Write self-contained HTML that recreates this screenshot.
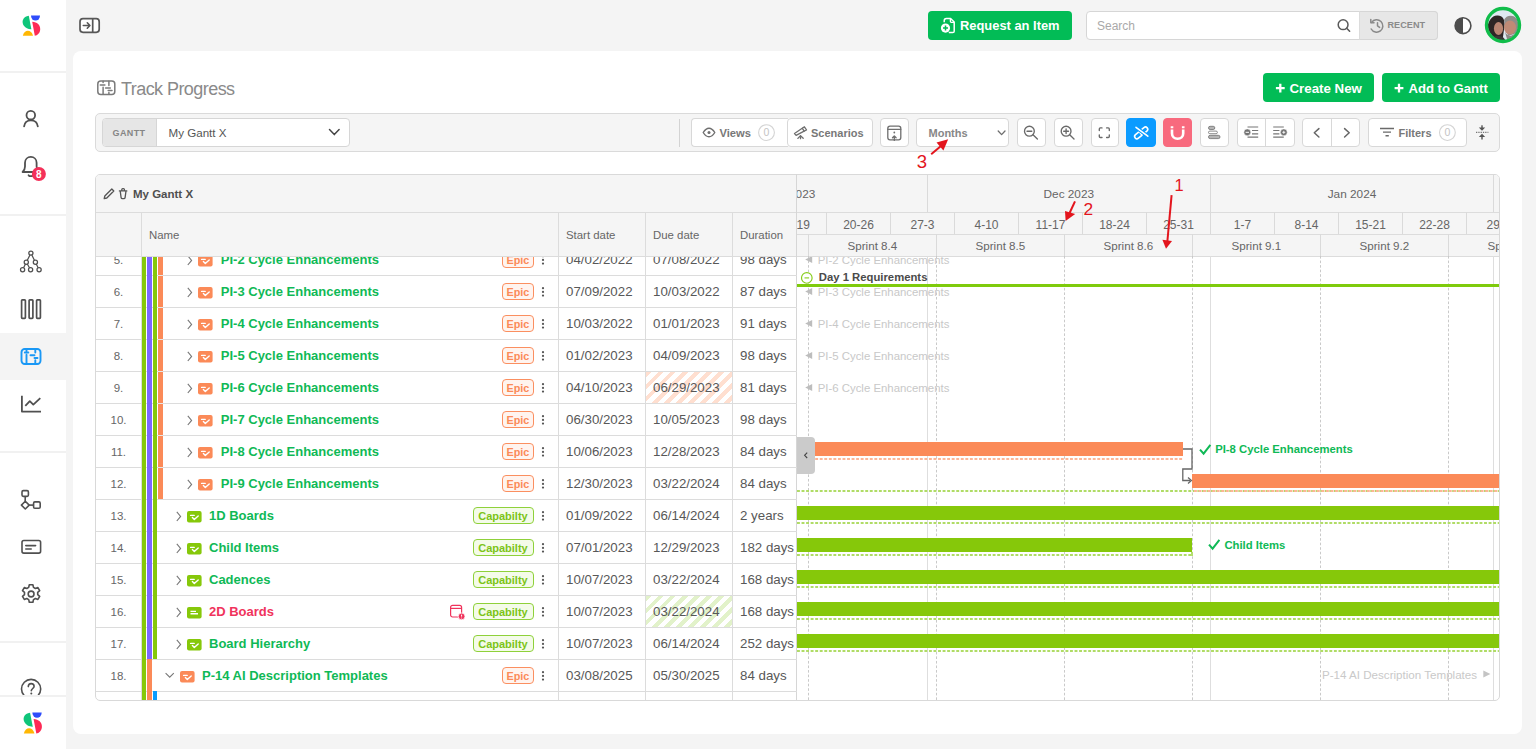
<!DOCTYPE html>
<html><head><meta charset="utf-8">
<style>
*{box-sizing:border-box;margin:0;padding:0}
html,body{width:1536px;height:749px;overflow:hidden;background:#f4f4f4;font-family:"Liberation Sans",sans-serif;color:#555}
.a{position:absolute}
svg.a{overflow:visible}
.t{position:absolute;white-space:nowrap;line-height:1}
.hr{position:absolute;left:0;width:66px;height:2px;background:#f1f1f1}
.gbtn{position:absolute;background:#02bc56;border-radius:4px}
.ib{position:absolute;top:118px;height:29px;background:#fff;border:1px solid #d8d8d8;border-radius:4px}
.vl{position:absolute;width:1px;background:#dcdcdc}
.hl{position:absolute;height:1px;background:#dcdcdc}
</style></head><body>
<!-- SIDEBAR -->
<div class="a" style="left:0;top:0;width:66px;height:749px;background:#fff"></div>
<div class="hr" style="top:71px"></div>
<div class="hr" style="top:214px"></div>
<div class="a" style="left:0;top:333px;width:66px;height:47px;background:#f4f4f4"></div>
<div class="hr" style="top:451px"></div>
<div class="hr" style="top:641px"></div>
<svg class="a" style="left:0;top:0" width="66" height="749" viewBox="0 0 66 749">
 <g id="logo">
  <path d="M31 15.6H40A4.5 5 0 0 1 31 15.6Z" fill="#2f4dfb"/>
  <path d="M28.8 15.8L31.4 29.2C25 29.5 21.5 24 22.9 20C23.8 17.5 26 16 28.8 15.8Z" fill="#0fc57a"/>
  <path d="M32.2 21.8C37 22 40.5 25 40.2 29.5C40 33 37.5 35.5 34.8 35.8Z" fill="#fd2a55"/>
  <path d="M22.8 35.8C23.5 32.5 25.8 30.8 27.9 30.8C30 30.8 32.3 32.5 33 35.8Z" fill="#ffb703"/>
 </g>
 <g fill="none" stroke="#505050" stroke-width="1.8" stroke-linecap="round" stroke-linejoin="round">
  <!-- person -->
  <circle cx="30.8" cy="115.2" r="4.3"/>
  <path d="M24.1 126.4C24.6 122.4 27.3 120.3 30.9 120.3C34.5 120.3 37.3 122.4 37.8 126.4"/>
  <!-- bell -->
  <path d="M28.6 175.3C29.6 176.5 32 176.5 33 175.3"/>
  <path d="M22.6 172C24.4 170.4 25 168.6 25 166.5V162.8C25 159.3 27.6 156.9 30.8 156.9C34 156.9 36.6 159.3 36.6 162.8V166.5C36.6 168.6 37.2 170.4 39 172Z" stroke-width="1.8"/>
 </g>
 <circle cx="38.9" cy="174" r="7" fill="#f4315a"/>
 <text x="38.9" y="177.6" font-family="Liberation Sans" font-size="10" font-weight="700" fill="#fff" text-anchor="middle">8</text>
 <g fill="none" stroke="#505050" stroke-width="1.25">
  <!-- hierarchy -->
  <path d="M30.9 253.1L26.3 262.2M30.9 253.1L35.4 262.2M26.3 262.2L22.6 269.7M26.3 262.2L30.6 269.7M35.4 262.2L39.1 269.7"/>
  <circle cx="30.9" cy="253.1" r="2.1" fill="#fff"/>
  <circle cx="26.3" cy="262.2" r="2.1" fill="#fff"/>
  <circle cx="35.4" cy="262.2" r="2.1" fill="#fff"/>
  <circle cx="22.6" cy="269.7" r="2.1" fill="#fff"/>
  <circle cx="30.6" cy="269.7" r="2.1" fill="#fff"/>
  <circle cx="39.1" cy="269.7" r="2.1" fill="#fff"/>
 </g>
 <g fill="none" stroke="#505050" stroke-width="1.7">
  <!-- columns -->
  <rect x="21.6" y="299.8" width="3.8" height="18.6" rx="0.8"/>
  <rect x="29.1" y="299.8" width="3.8" height="18.6" rx="0.8"/>
  <rect x="36.6" y="299.8" width="3.8" height="18.6" rx="0.8"/>
 </g>
 <g fill="none" stroke="#1a98f5" stroke-width="1.9" stroke-linecap="round">
  <!-- gantt active -->
  <rect x="21.5" y="349" width="19" height="15" rx="3.2"/>
  <path d="M26.5 349.2V351M24.8 352.5H28.3M26.5 354.8V363.5M35.3 349.2V352.5M30.5 355.2H34.5M34.5 358H37.5M35.3 360.2V363.5"/>
 </g>
 <g fill="none" stroke="#505050" stroke-width="1.8" stroke-linejoin="round">
  <!-- chart -->
  <path d="M21.9 395.7V411.6H41"/>
  <path d="M25.3 405.8L29.8 401.2L33.3 404.6L40.3 398.2"/>
 </g>
 <g fill="none" stroke="#505050" stroke-width="1.6" stroke-linejoin="round">
  <!-- flow -->
  <rect x="22" y="490.6" width="6.4" height="5.8" rx="1.3"/>
  <path d="M25.2 496.4V501.2"/>
  <path d="M25.3 501.2L29.2 505.1L25.3 509L21.4 505.1Z"/>
  <path d="M29.2 505.1H33.6"/>
  <rect x="33.6" y="501.9" width="6.6" height="6.4" rx="1.3"/>
  <!-- card -->
  <rect x="22" y="540.5" width="18.6" height="12.6" rx="1.8"/>
  <path d="M25.8 545.6H35.6M25.8 549H31.2" stroke-linecap="round"/>
 </g>
 <g fill="none" stroke="#505050" stroke-width="1.6" stroke-linejoin="round">
  <!-- gear -->
  <path d="M29.3 584.8h3.6l0.6 2.6 1.9 1.1 2.5-0.9 1.8 3.1-2 1.7v2.2l2 1.7-1.8 3.1-2.5-0.9-1.9 1.1-0.6 2.6h-3.6l-0.6-2.6-1.9-1.1-2.5 0.9-1.8-3.1 2-1.7v-2.2l-2-1.7 1.8-3.1 2.5 0.9 1.9-1.1z"/>
  <circle cx="31.1" cy="594" r="2.9"/>
  <!-- help -->
  <circle cx="31.1" cy="689" r="9.6"/>
  <path d="M28.3 686.6C28.3 684.8 29.6 683.6 31.2 683.6C32.9 683.6 34.1 684.8 34.1 686.3C34.1 688.4 31.3 688.6 31.3 690.8" stroke-linecap="round"/>
 </g>
 <circle cx="31.3" cy="693.6" r="1" fill="#505050"/>
</svg>
<div class="a" style="left:0;top:697px;width:66px;height:52px;background:#fff"></div><div class="hr" style="top:695px"></div>
<svg class="a" style="left:1px;top:697px" width="64" height="52" viewBox="0 0 64 52">
 <g transform="translate(-0.9,-0.7) scale(1.04)">
  <path d="M31 15.6H40A4.5 5 0 0 1 31 15.6Z" fill="#2f4dfb"/>
  <path d="M28.8 15.8L31.4 29.2C25 29.5 21.5 24 22.9 20C23.8 17.5 26 16 28.8 15.8Z" fill="#0fc57a"/>
  <path d="M32.2 21.8C37 22 40.5 25 40.2 29.5C40 33 37.5 35.5 34.8 35.8Z" fill="#fd2a55"/>
  <path d="M22.8 35.8C23.5 32.5 25.8 30.8 27.9 30.8C30 30.8 32.3 32.5 33 35.8Z" fill="#ffb703"/>
 </g>
</svg>
<!-- TOPBAR -->
<svg class="a" style="left:0;top:0" width="110" height="50">
 <rect x="80" y="18.7" width="19.2" height="13.6" rx="3" fill="#fff" stroke="#575757" stroke-width="1.7"/>
 <path d="M92.7 18.7V32.3" stroke="#575757" stroke-width="1.7"/>
 <path d="M83.3 25.5H89.8M87.3 22.8L89.9 25.5L87.3 28.2" fill="none" stroke="#575757" stroke-width="1.6" stroke-linecap="round" stroke-linejoin="round"/>
</svg>
<div class="gbtn" style="left:928px;top:11px;width:144px;height:29px"></div>
<svg class="a" style="left:928px;top:11px" width="40" height="29">
 <path d="M16.2 11.2V9.8C16.2 8.5 17 7.5 18.4 7.5H22.6L26.2 11V20.2C26.2 21 25.6 21.6 24.8 21.6H20.8" fill="none" stroke="#fff" stroke-width="1.5" stroke-linejoin="round"/>
 <path d="M22.4 7.8V10.6C22.4 11.1 22.8 11.4 23.2 11.4H26" fill="none" stroke="#fff" stroke-width="1.3"/>
 <circle cx="17.5" cy="17.1" r="4.6" fill="#fff"/>
 <path d="M17.5 14.6V19.6M15 17.1H20" stroke="#02bc55" stroke-width="1.5"/>
</svg>
<div class="t" style="left:960px;top:19.5px;font-size:12.9px;font-weight:700;color:#fff">Request an Item</div>
<div class="a" style="left:1086px;top:11px;width:352px;height:29px;background:#fff;border:1px solid #d6d6d6;border-radius:4px"></div>
<div class="a" style="left:1359px;top:11px;width:79px;height:29px;background:#e7e7e7;border:1px solid #d6d6d6;border-left:1px solid #dcdcdc;border-radius:0 4px 4px 0"></div>
<div class="t" style="left:1097px;top:20px;font-size:12px;color:#a9a9a9">Search</div>
<svg class="a" style="left:1330px;top:14px" width="160" height="24">
 <circle cx="13.1" cy="10.7" r="4.9" fill="none" stroke="#5a5a5a" stroke-width="1.5"/>
 <path d="M16.7 14.3L19.6 17.2" stroke="#5a5a5a" stroke-width="1.6" stroke-linecap="round"/>
 <g fill="none" stroke="#8a8a8a" stroke-width="1.5" stroke-linecap="round" stroke-linejoin="round">
  <path d="M41.6 8.4A6.2 6.2 0 1 1 41.2 15"/>
  <path d="M40.8 5.6V8.8H44"/>
  <path d="M47.5 8.8V11.8L49.6 13.4"/>
 </g>
 <circle cx="133" cy="11.7" r="7.9" fill="#fff" stroke="#4d4d4d" stroke-width="1.6"/>
 <path d="M133 3.8A7.9 7.9 0 0 0 133 19.6Z" fill="#4d4d4d"/>
</svg>
<div class="t" style="left:1387.5px;top:21px;font-size:9.1px;font-weight:700;color:#8a8a8a;letter-spacing:0.05px">RECENT</div>
<svg class="a" style="left:1480px;top:2px" width="46" height="46">
 <defs>
  <clipPath id="av"><circle cx="23" cy="23" r="15.2"/></clipPath>
 </defs>
 <g clip-path="url(#av)">
  <rect x="0" y="0" width="46" height="46" fill="#dfe9f1"/>
  <path d="M6 40C6 24 9 14 17 13.5C23 13 25 18 24.5 24L22 42Z" fill="#2e2626"/>
  <path d="M24 18C26 13 33 12.5 36 16C39 19 39 26 37 31L28 34Z" fill="#8f8c8a"/>
  <ellipse cx="18.5" cy="26.5" rx="4.6" ry="6.5" fill="#b98572"/>
  <ellipse cx="30" cy="25.5" rx="6" ry="7" fill="#bf8a76"/>
  <path d="M25 30C27 34 31 35 34 32L33 37L27 37Z" fill="#8d8784"/>
  <path d="M8 46C9 36 14 33 20 34C24 35 26 37 27 46Z" fill="#3a3535"/>
  <path d="M22 46C23 39 28 36 34 36C38 36 40 40 40 46Z" fill="#4c4747"/>
 </g>
 <circle cx="23" cy="23" r="16.5" fill="none" stroke="#10bd4a" stroke-width="3.4"/>
</svg>
<!-- CARD -->
<div class="a" style="left:73px;top:51px;width:1449px;height:683px;background:#fff;border-radius:8px"></div>
<svg class="a" style="left:90px;top:70px" width="30" height="30">
 <g fill="none" stroke="#7a7a7a" stroke-width="1.5" stroke-linecap="round">
  <rect x="7.8" y="11" width="17" height="13.4" rx="3"/>
  <path d="M13.1 11.2V12.4M10.3 15.1H14.9M13.1 17.3V24.2M18.9 11.2V15.5M15.6 18H20.3M18.2 20.6H22M18.9 22.5V24.2"/>
 </g>
</svg>
<div class="t" style="left:121px;top:80px;font-size:18px;letter-spacing:-0.56px;color:#8a8a8a">Track Progress</div>
<div class="gbtn" style="left:1263px;top:73px;width:111px;height:29px"></div>
<div class="gbtn" style="left:1382px;top:73px;width:117.5px;height:29px"></div>
<svg class="a" style="left:1263px;top:73px" width="240" height="29">
 <path d="M12.9 15.2H21.7M17.3 10.8V19.6" stroke="#fff" stroke-width="2.3"/>
 <path d="M131.6 15.2H140.4M136 10.8V19.6" stroke="#fff" stroke-width="2.3"/>
</svg>
<div class="t" style="left:1289.5px;top:81.5px;font-size:13.3px;font-weight:700;color:#fff">Create New</div>
<div class="t" style="left:1408.5px;top:81.5px;font-size:13.1px;font-weight:700;color:#fff">Add to Gantt</div>
<!-- TOOLBAR -->
<div class="a" style="left:95px;top:113px;width:1404.5px;height:39px;background:#f5f5f5;border:1px solid #dadada;border-radius:5px"></div>
<div class="a" style="left:102px;top:118px;width:248px;height:29px;background:#fff;border:1px solid #d6d6d6;border-radius:4px;overflow:hidden">
 <div class="a" style="left:0;top:0;width:54px;height:27px;background:#e6e6e6;border-right:1px solid #d6d6d6"></div>
</div>
<div class="t" style="left:112.5px;top:128.7px;font-size:9px;font-weight:700;color:#858585;letter-spacing:0.4px">GANTT</div>
<div class="t" style="left:168.5px;top:127px;font-size:11.6px;color:#555">My Gantt X</div>
<div class="a" style="left:679px;top:118.5px;width:1px;height:28px;background:#d3d3d3"></div>
<div class="ib" style="left:691px;width:97px;border-right:none;border-radius:4px 0 0 4px"></div>
<div class="ib" style="left:786.5px;width:86px"></div>
<div class="ib" style="left:880px;width:29px"></div>
<div class="ib" style="left:916px;width:93px"></div>
<div class="ib" style="left:1016.5px;width:29px"></div>
<div class="ib" style="left:1053.5px;width:29px"></div>
<div class="ib" style="left:1090.5px;width:28.5px"></div>
<div class="ib" style="left:1126px;width:29.5px;background:#0b9bff;border-color:#0b9bff"></div>
<div class="ib" style="left:1163px;width:29px;background:#f86a7e;border-color:#f86a7e"></div>
<div class="ib" style="left:1199.5px;width:29px"></div>
<div class="ib" style="left:1236.5px;width:58px"></div>
<div class="a" style="left:1265px;top:119px;width:1px;height:27px;background:#d8d8d8"></div>
<div class="ib" style="left:1302px;width:58px"></div>
<div class="a" style="left:1331px;top:119px;width:1px;height:27px;background:#d8d8d8"></div>
<div class="ib" style="left:1368px;width:99px"></div>
<div class="t" style="left:719.5px;top:128.3px;font-size:11.2px;font-weight:700;color:#787878">Views</div>
<div class="t" style="left:811px;top:128.3px;font-size:11px;font-weight:700;color:#787878">Scenarios</div>
<div class="t" style="left:928.5px;top:127.8px;font-size:11px;font-weight:700;color:#878787">Months</div>
<div class="t" style="left:1398.5px;top:128.3px;font-size:11px;font-weight:700;color:#787878">Filters</div>
<svg class="a" style="left:0;top:0;overflow:visible" width="1536" height="160">
 <g fill="none" stroke="#454545" stroke-width="1.5" stroke-linecap="round" stroke-linejoin="round">
  <path d="M329.5 129.6L334.3 134.6L339.1 129.6"/>
 </g>
 <g fill="none" stroke="#6f6f6f" stroke-width="1.4" stroke-linecap="round" stroke-linejoin="round">
  <!-- eye -->
  <path d="M703.2 132.5C705 129.6 707 128.2 709 128.2C711 128.2 713 129.6 714.8 132.5C713 135.4 711 136.8 709 136.8C707 136.8 705 135.4 703.2 132.5Z"/>
 </g>
 <circle cx="709" cy="132.5" r="1.5" fill="#6f6f6f"/>
 <circle cx="766.5" cy="132.6" r="7.9" fill="none" stroke="#d4d4d4" stroke-width="1.1"/>
 <circle cx="1447.4" cy="132.6" r="7.9" fill="none" stroke="#d4d4d4" stroke-width="1.1"/>
 <text x="766.5" y="136.4" font-family="Liberation Sans" font-size="10.5" fill="#c4c4c4" text-anchor="middle">0</text>
 <text x="1447.4" y="136.4" font-family="Liberation Sans" font-size="10.5" fill="#c4c4c4" text-anchor="middle">0</text>
 <g fill="none" stroke="#6f6f6f" stroke-width="1.3" stroke-linecap="round" stroke-linejoin="round">
  <!-- telescope -->
  <path d="M794.5 133.5L804.4 126.8L806.5 129.9L796.1 135.4Z"/>
  <path d="M802.4 128.3L804.1 131.2"/>
  <path d="M800.5 135.6L797.9 138.4M800.5 135.6V138.7M800.5 135.6L803.2 138.3"/>
  <!-- export -->
  <rect x="887.8" y="126.2" width="13" height="13.6" rx="2.2"/>
  <path d="M887.8 129.3H900.8"/>
  <path d="M894.3 136.2V140.4M892.5 137.8L894.3 136L896.1 137.8"/>
  <!-- months chevron -->
  <path d="M998.2 131L1001.6 134.6L1005 131"/>
 </g>
 <circle cx="894.3" cy="132.5" r="0.9" fill="#6f6f6f"/>
 <g fill="none" stroke="#6a6a6a" stroke-width="1.35" stroke-linecap="round" stroke-linejoin="round">
  <!-- zoom out -->
  <circle cx="1029.4" cy="131.2" r="4.9"/>
  <path d="M1033 134.8L1037.4 139.1M1027 131.2H1031.8"/>
  <!-- zoom in -->
  <circle cx="1066.1" cy="131.2" r="4.9"/>
  <path d="M1069.7 134.8L1074 139M1063.7 131.2H1068.5M1066.1 128.8V133.6"/>
  <!-- fullscreen -->
  <path d="M1099.3 130.6V128.9Q1099.3 127.9 1100.3 127.9H1102M1106.6 127.9H1108.3Q1109.3 127.9 1109.3 128.9V130.6M1109.3 134.8V136.5Q1109.3 137.5 1108.3 137.5H1106.6M1102 137.5H1100.3Q1099.3 137.5 1099.3 136.5V134.8"/>
 </g>
 <g fill="none" stroke="#fff" stroke-width="1.6" stroke-linecap="round" stroke-linejoin="round">
  <!-- link -->
  <g transform="rotate(-40 1141.2 132.9)">
   <rect x="1133.4" y="130.6" width="8.6" height="4.6" rx="2.3"/>
   <rect x="1140.4" y="130.6" width="8.6" height="4.6" rx="2.3"/>
  </g>
  <path d="M1136 127.3L1147.8 136.2" stroke="#0b9bff" stroke-width="3.6"/>
  <path d="M1136 127.3L1147.8 136.2"/>
  <!-- magnet -->
  <path d="M1172 129.6V133.4C1172 136.8 1174.5 138.8 1177.6 138.8C1180.7 138.8 1183.2 136.8 1183.2 133.4V129.6" stroke-width="2.6" stroke-linecap="butt"/>
  <path d="M1172 126.3V128.3M1183.2 126.3V128.3" stroke-width="2.6" stroke-linecap="butt"/>
 </g>
 <g stroke="#6e6e6e" stroke-width="0.8" fill="#b5b5b5">
  <!-- align -->
  <rect x="1208.5" y="126.3" width="6.3" height="3.2" rx="1.6"/>
  <rect x="1208.5" y="131.1" width="8.9" height="2.6" rx="1.3" fill="#fff"/>
  <rect x="1208.5" y="135.3" width="11.5" height="3.3" rx="1.65"/>
 </g>
 <g fill="none" stroke="#777" stroke-width="1.2">
  <path d="M1247.5 127H1258.2M1252 130.5H1258.2M1252 133.8H1258.2M1247.5 137.2H1258.2"/>
  <path d="M1273.2 127H1283.8M1273.2 130.5H1279.4M1273.2 133.8H1279.4M1273.2 137.2H1283.8"/>
 </g>
 <circle cx="1247.3" cy="132.3" r="3.4" fill="#727272" stroke="#fff" stroke-width="0.5"/>
 <path d="M1245.6 132.3H1249" stroke="#fff" stroke-width="1"/>
 <circle cx="1283.8" cy="132.3" r="3.4" fill="#727272" stroke="#fff" stroke-width="0.5"/>
 <path d="M1282.3 132.3H1285.3M1283.8 130.8V133.8" stroke="#fff" stroke-width="0.9"/>
 <g fill="none" stroke="#666" stroke-width="1.5" stroke-linecap="round" stroke-linejoin="round">
  <path d="M1318.9 128.6L1314.3 132.8L1318.9 137"/>
  <path d="M1344.6 128.6L1349.2 132.8L1344.6 137"/>
 </g>
 <g fill="none" stroke="#6a6a6a" stroke-width="1.4">
  <path d="M1380 128.5H1394M1383 132.1H1391M1385.5 135.8H1388.8"/>
 </g>
 <g fill="#555">
  <path d="M1482 130.8L1478.8 127.6H1485.2Z"/>
  <rect x="1481.3" y="125.3" width="1.4" height="3"/>
  <path d="M1482 133.8L1478.8 137H1485.2Z"/>
  <rect x="1481.3" y="136.5" width="1.4" height="3"/>
 </g>
 <path d="M1476 132.3H1488.4" stroke="#555" stroke-width="1" stroke-dasharray="1.3 1"/>
</svg>
<!-- GRID -->
<div class="a" style="left:95px;top:174px;width:1405px;height:527px;border:1px solid #d9d9d9;border-radius:5px;background:#fff;overflow:hidden">
 <div class="a" style="left:0;top:0;width:1403px;height:82px;background:#f5f5f5"></div>
</div>
<div class="hl" style="left:96px;top:212px;width:1403px"></div>
<div class="hl" style="left:96px;top:256px;width:701px"></div>
<div class="hl" style="left:797px;top:234px;width:702px"></div>
<div class="hl" style="left:797px;top:256px;width:702px"></div>
<div class="vl" style="left:141px;top:212px;height:488px"></div>
<div class="vl" style="left:558px;top:212px;height:488px"></div>
<div class="vl" style="left:645px;top:212px;height:488px"></div>
<div class="vl" style="left:732px;top:212px;height:488px"></div>
<div class="vl" style="left:796px;top:174px;height:526px;background:#d6d6d6"></div>
<svg class="a" style="left:96px;top:180px" width="40" height="26"><g fill="none" stroke="#555" stroke-width="1.3" stroke-linejoin="round" stroke-linecap="round"><path d="M8.8 16L15.8 9L17.8 11L10.8 18L8.2 18.6Z"/><path d="M23.4 10.9H30.8M25.8 10.9V9.5Q25.8 8.6 26.7 8.6H27.5Q28.4 8.6 28.4 9.5V10.9M24.3 11.7L25.1 17.6Q25.3 18.6 26.3 18.6H27.9Q28.9 18.6 29.1 17.6L29.9 11.7"/></g></svg>
<div class="t" style="left:133px;top:188.5px;font-size:11.5px;font-weight:700;color:#4f4f4f">My Gantt X</div>
<div class="t" style="left:149px;top:229.5px;font-size:11.4px;color:#666">Name</div>
<div class="t" style="left:566px;top:229.5px;font-size:11.4px;color:#666">Start date</div>
<div class="t" style="left:653px;top:229.5px;font-size:11.4px;color:#666">Due date</div>
<div class="t" style="left:740px;top:229.5px;font-size:11.4px;color:#666">Duration</div>
<div class="a" style="left:96px;top:257px;width:701px;height:443px;overflow:hidden">
<div class="hl" style="left:0;top:18px;width:701px"></div>
<div class="hl" style="left:0;top:50px;width:701px"></div>
<div class="hl" style="left:0;top:82px;width:701px"></div>
<div class="hl" style="left:0;top:114px;width:701px"></div>
<div class="hl" style="left:0;top:146px;width:701px"></div>
<div class="a" style="left:550px;top:115px;width:86px;height:31px;background:repeating-linear-gradient(135deg,#ffdfd0 0 4.2px,#fff 4.2px 8.5px)"></div>
<div class="hl" style="left:0;top:178px;width:701px"></div>
<div class="hl" style="left:0;top:210px;width:701px"></div>
<div class="hl" style="left:0;top:242px;width:701px"></div>
<div class="hl" style="left:0;top:274px;width:701px"></div>
<div class="hl" style="left:0;top:306px;width:701px"></div>
<div class="hl" style="left:0;top:338px;width:701px"></div>
<div class="hl" style="left:0;top:370px;width:701px"></div>
<div class="a" style="left:550px;top:339px;width:86px;height:31px;background:repeating-linear-gradient(135deg,#e2f2ca 0 4.2px,#fff 4.2px 8.5px)"></div>
<div class="hl" style="left:0;top:402px;width:701px"></div>
<div class="hl" style="left:0;top:434px;width:701px"></div>
<div class="a" style="left:45.5px;top:-1px;width:4.5px;height:403px;background:#86c80a"></div>
<div class="a" style="left:51px;top:-1px;width:5px;height:403px;background:#7d67ff"></div>
<div class="a" style="left:56.5px;top:-1px;width:4.5px;height:403px;background:#86c80a"></div>
<div class="a" style="left:62px;top:-1px;width:5px;height:243px;background:#fb8a58"></div>
<div class="a" style="left:45.5px;top:402px;width:4.5px;height:41px;background:#86c80a"></div>
<div class="a" style="left:51px;top:402px;width:5px;height:41px;background:#fb8a58"></div>
<div class="a" style="left:56.5px;top:434px;width:4.5px;height:9px;background:#0a9cff"></div>
<div class="a" style="left:62px;top:18px;width:5px;height:1px;background:#e6e6e6"></div>
<div class="a" style="left:62px;top:50px;width:5px;height:1px;background:#e6e6e6"></div>
<div class="a" style="left:62px;top:82px;width:5px;height:1px;background:#e6e6e6"></div>
<div class="a" style="left:62px;top:114px;width:5px;height:1px;background:#e6e6e6"></div>
<div class="a" style="left:62px;top:146px;width:5px;height:1px;background:#e6e6e6"></div>
<div class="a" style="left:62px;top:178px;width:5px;height:1px;background:#e6e6e6"></div>
<div class="a" style="left:62px;top:210px;width:5px;height:1px;background:#e6e6e6"></div>
</div>
<div class="a" style="left:0;top:257px;width:797px;height:443px;overflow:hidden"><div class="a" style="left:0;top:-257px;width:797px;height:749px">
<div class="t" style="left:96px;width:45px;text-align:center;top:255px;font-size:11.5px;color:#666">5.</div>
<svg class="a" style="left:187.1px;top:254.6px" width="8" height="12"><path d="M0.8 0.8L4.6 5.4L0.8 10" fill="none" stroke="#777" stroke-width="1.1"/></svg>
<svg class="a" style="left:198px;top:254.8px" width="15" height="11.5"><rect x="0" y="0" width="14.6" height="11.4" rx="2" fill="#fb8a58"/><path d="M3.6 4.4H7.2M5.4 6.5L7.3 8.4L11.2 4.9" fill="none" stroke="#fff" stroke-width="1.4" stroke-linecap="round" stroke-linejoin="round"/></svg>
<div class="t" style="left:220.8px;top:253px;font-size:13px;font-weight:700;color:#0fb956">PI-2 Cycle Enhancements</div>
<div class="a" style="left:502px;top:251px;width:32px;height:17px;border:1.3px solid #fb8f60;background:#fff4ef;border-radius:4px"></div>
<div class="t" style="left:506.5px;top:255px;font-size:10.8px;font-weight:700;color:#fb8a58">Epic</div>
<svg class="a" style="left:541px;top:253.4px" width="4" height="14"><circle cx="2" cy="3.2" r="1.1" fill="#555"/><circle cx="2" cy="6.9" r="1.1" fill="#555"/><circle cx="2" cy="10.6" r="1.1" fill="#555"/></svg>
<div class="t" style="left:566px;top:253px;font-size:13.3px;color:#585858">04/02/2022</div>
<div class="t" style="left:653px;top:253px;font-size:13.3px;color:#585858">07/08/2022</div>
<div class="t" style="left:740px;top:253px;font-size:13.3px;color:#585858">98 days</div>
<div class="t" style="left:96px;width:45px;text-align:center;top:287px;font-size:11.5px;color:#666">6.</div>
<svg class="a" style="left:187.1px;top:286.6px" width="8" height="12"><path d="M0.8 0.8L4.6 5.4L0.8 10" fill="none" stroke="#777" stroke-width="1.1"/></svg>
<svg class="a" style="left:198px;top:286.8px" width="15" height="11.5"><rect x="0" y="0" width="14.6" height="11.4" rx="2" fill="#fb8a58"/><path d="M3.6 4.4H7.2M5.4 6.5L7.3 8.4L11.2 4.9" fill="none" stroke="#fff" stroke-width="1.4" stroke-linecap="round" stroke-linejoin="round"/></svg>
<div class="t" style="left:220.8px;top:285px;font-size:13px;font-weight:700;color:#0fb956">PI-3 Cycle Enhancements</div>
<div class="a" style="left:502px;top:283px;width:32px;height:17px;border:1.3px solid #fb8f60;background:#fff4ef;border-radius:4px"></div>
<div class="t" style="left:506.5px;top:287px;font-size:10.8px;font-weight:700;color:#fb8a58">Epic</div>
<svg class="a" style="left:541px;top:285.4px" width="4" height="14"><circle cx="2" cy="3.2" r="1.1" fill="#555"/><circle cx="2" cy="6.9" r="1.1" fill="#555"/><circle cx="2" cy="10.6" r="1.1" fill="#555"/></svg>
<div class="t" style="left:566px;top:285px;font-size:13.3px;color:#585858">07/09/2022</div>
<div class="t" style="left:653px;top:285px;font-size:13.3px;color:#585858">10/03/2022</div>
<div class="t" style="left:740px;top:285px;font-size:13.3px;color:#585858">87 days</div>
<div class="t" style="left:96px;width:45px;text-align:center;top:319px;font-size:11.5px;color:#666">7.</div>
<svg class="a" style="left:187.1px;top:318.6px" width="8" height="12"><path d="M0.8 0.8L4.6 5.4L0.8 10" fill="none" stroke="#777" stroke-width="1.1"/></svg>
<svg class="a" style="left:198px;top:318.8px" width="15" height="11.5"><rect x="0" y="0" width="14.6" height="11.4" rx="2" fill="#fb8a58"/><path d="M3.6 4.4H7.2M5.4 6.5L7.3 8.4L11.2 4.9" fill="none" stroke="#fff" stroke-width="1.4" stroke-linecap="round" stroke-linejoin="round"/></svg>
<div class="t" style="left:220.8px;top:317px;font-size:13px;font-weight:700;color:#0fb956">PI-4 Cycle Enhancements</div>
<div class="a" style="left:502px;top:315px;width:32px;height:17px;border:1.3px solid #fb8f60;background:#fff4ef;border-radius:4px"></div>
<div class="t" style="left:506.5px;top:319px;font-size:10.8px;font-weight:700;color:#fb8a58">Epic</div>
<svg class="a" style="left:541px;top:317.4px" width="4" height="14"><circle cx="2" cy="3.2" r="1.1" fill="#555"/><circle cx="2" cy="6.9" r="1.1" fill="#555"/><circle cx="2" cy="10.6" r="1.1" fill="#555"/></svg>
<div class="t" style="left:566px;top:317px;font-size:13.3px;color:#585858">10/03/2022</div>
<div class="t" style="left:653px;top:317px;font-size:13.3px;color:#585858">01/01/2023</div>
<div class="t" style="left:740px;top:317px;font-size:13.3px;color:#585858">91 days</div>
<div class="t" style="left:96px;width:45px;text-align:center;top:351px;font-size:11.5px;color:#666">8.</div>
<svg class="a" style="left:187.1px;top:350.6px" width="8" height="12"><path d="M0.8 0.8L4.6 5.4L0.8 10" fill="none" stroke="#777" stroke-width="1.1"/></svg>
<svg class="a" style="left:198px;top:350.8px" width="15" height="11.5"><rect x="0" y="0" width="14.6" height="11.4" rx="2" fill="#fb8a58"/><path d="M3.6 4.4H7.2M5.4 6.5L7.3 8.4L11.2 4.9" fill="none" stroke="#fff" stroke-width="1.4" stroke-linecap="round" stroke-linejoin="round"/></svg>
<div class="t" style="left:220.8px;top:349px;font-size:13px;font-weight:700;color:#0fb956">PI-5 Cycle Enhancements</div>
<div class="a" style="left:502px;top:347px;width:32px;height:17px;border:1.3px solid #fb8f60;background:#fff4ef;border-radius:4px"></div>
<div class="t" style="left:506.5px;top:351px;font-size:10.8px;font-weight:700;color:#fb8a58">Epic</div>
<svg class="a" style="left:541px;top:349.4px" width="4" height="14"><circle cx="2" cy="3.2" r="1.1" fill="#555"/><circle cx="2" cy="6.9" r="1.1" fill="#555"/><circle cx="2" cy="10.6" r="1.1" fill="#555"/></svg>
<div class="t" style="left:566px;top:349px;font-size:13.3px;color:#585858">01/02/2023</div>
<div class="t" style="left:653px;top:349px;font-size:13.3px;color:#585858">04/09/2023</div>
<div class="t" style="left:740px;top:349px;font-size:13.3px;color:#585858">98 days</div>
<div class="t" style="left:96px;width:45px;text-align:center;top:383px;font-size:11.5px;color:#666">9.</div>
<svg class="a" style="left:187.1px;top:382.6px" width="8" height="12"><path d="M0.8 0.8L4.6 5.4L0.8 10" fill="none" stroke="#777" stroke-width="1.1"/></svg>
<svg class="a" style="left:198px;top:382.8px" width="15" height="11.5"><rect x="0" y="0" width="14.6" height="11.4" rx="2" fill="#fb8a58"/><path d="M3.6 4.4H7.2M5.4 6.5L7.3 8.4L11.2 4.9" fill="none" stroke="#fff" stroke-width="1.4" stroke-linecap="round" stroke-linejoin="round"/></svg>
<div class="t" style="left:220.8px;top:381px;font-size:13px;font-weight:700;color:#0fb956">PI-6 Cycle Enhancements</div>
<div class="a" style="left:502px;top:379px;width:32px;height:17px;border:1.3px solid #fb8f60;background:#fff4ef;border-radius:4px"></div>
<div class="t" style="left:506.5px;top:383px;font-size:10.8px;font-weight:700;color:#fb8a58">Epic</div>
<svg class="a" style="left:541px;top:381.4px" width="4" height="14"><circle cx="2" cy="3.2" r="1.1" fill="#555"/><circle cx="2" cy="6.9" r="1.1" fill="#555"/><circle cx="2" cy="10.6" r="1.1" fill="#555"/></svg>
<div class="t" style="left:566px;top:381px;font-size:13.3px;color:#585858">04/10/2023</div>
<div class="t" style="left:653px;top:381px;font-size:13.3px;color:#585858">06/29/2023</div>
<div class="t" style="left:740px;top:381px;font-size:13.3px;color:#585858">81 days</div>
<div class="t" style="left:96px;width:45px;text-align:center;top:415px;font-size:11.5px;color:#666">10.</div>
<svg class="a" style="left:187.1px;top:414.6px" width="8" height="12"><path d="M0.8 0.8L4.6 5.4L0.8 10" fill="none" stroke="#777" stroke-width="1.1"/></svg>
<svg class="a" style="left:198px;top:414.8px" width="15" height="11.5"><rect x="0" y="0" width="14.6" height="11.4" rx="2" fill="#fb8a58"/><path d="M3.6 4.4H7.2M5.4 6.5L7.3 8.4L11.2 4.9" fill="none" stroke="#fff" stroke-width="1.4" stroke-linecap="round" stroke-linejoin="round"/></svg>
<div class="t" style="left:220.8px;top:413px;font-size:13px;font-weight:700;color:#0fb956">PI-7 Cycle Enhancements</div>
<div class="a" style="left:502px;top:411px;width:32px;height:17px;border:1.3px solid #fb8f60;background:#fff4ef;border-radius:4px"></div>
<div class="t" style="left:506.5px;top:415px;font-size:10.8px;font-weight:700;color:#fb8a58">Epic</div>
<svg class="a" style="left:541px;top:413.4px" width="4" height="14"><circle cx="2" cy="3.2" r="1.1" fill="#555"/><circle cx="2" cy="6.9" r="1.1" fill="#555"/><circle cx="2" cy="10.6" r="1.1" fill="#555"/></svg>
<div class="t" style="left:566px;top:413px;font-size:13.3px;color:#585858">06/30/2023</div>
<div class="t" style="left:653px;top:413px;font-size:13.3px;color:#585858">10/05/2023</div>
<div class="t" style="left:740px;top:413px;font-size:13.3px;color:#585858">98 days</div>
<div class="t" style="left:96px;width:45px;text-align:center;top:447px;font-size:11.5px;color:#666">11.</div>
<svg class="a" style="left:187.1px;top:446.6px" width="8" height="12"><path d="M0.8 0.8L4.6 5.4L0.8 10" fill="none" stroke="#777" stroke-width="1.1"/></svg>
<svg class="a" style="left:198px;top:446.8px" width="15" height="11.5"><rect x="0" y="0" width="14.6" height="11.4" rx="2" fill="#fb8a58"/><path d="M3.6 4.4H7.2M5.4 6.5L7.3 8.4L11.2 4.9" fill="none" stroke="#fff" stroke-width="1.4" stroke-linecap="round" stroke-linejoin="round"/></svg>
<div class="t" style="left:220.8px;top:445px;font-size:13px;font-weight:700;color:#0fb956">PI-8 Cycle Enhancements</div>
<div class="a" style="left:502px;top:443px;width:32px;height:17px;border:1.3px solid #fb8f60;background:#fff4ef;border-radius:4px"></div>
<div class="t" style="left:506.5px;top:447px;font-size:10.8px;font-weight:700;color:#fb8a58">Epic</div>
<svg class="a" style="left:541px;top:445.4px" width="4" height="14"><circle cx="2" cy="3.2" r="1.1" fill="#555"/><circle cx="2" cy="6.9" r="1.1" fill="#555"/><circle cx="2" cy="10.6" r="1.1" fill="#555"/></svg>
<div class="t" style="left:566px;top:445px;font-size:13.3px;color:#585858">10/06/2023</div>
<div class="t" style="left:653px;top:445px;font-size:13.3px;color:#585858">12/28/2023</div>
<div class="t" style="left:740px;top:445px;font-size:13.3px;color:#585858">84 days</div>
<div class="t" style="left:96px;width:45px;text-align:center;top:479px;font-size:11.5px;color:#666">12.</div>
<svg class="a" style="left:187.1px;top:478.6px" width="8" height="12"><path d="M0.8 0.8L4.6 5.4L0.8 10" fill="none" stroke="#777" stroke-width="1.1"/></svg>
<svg class="a" style="left:198px;top:478.8px" width="15" height="11.5"><rect x="0" y="0" width="14.6" height="11.4" rx="2" fill="#fb8a58"/><path d="M3.6 4.4H7.2M5.4 6.5L7.3 8.4L11.2 4.9" fill="none" stroke="#fff" stroke-width="1.4" stroke-linecap="round" stroke-linejoin="round"/></svg>
<div class="t" style="left:220.8px;top:477px;font-size:13px;font-weight:700;color:#0fb956">PI-9 Cycle Enhancements</div>
<div class="a" style="left:502px;top:475px;width:32px;height:17px;border:1.3px solid #fb8f60;background:#fff4ef;border-radius:4px"></div>
<div class="t" style="left:506.5px;top:479px;font-size:10.8px;font-weight:700;color:#fb8a58">Epic</div>
<svg class="a" style="left:541px;top:477.4px" width="4" height="14"><circle cx="2" cy="3.2" r="1.1" fill="#555"/><circle cx="2" cy="6.9" r="1.1" fill="#555"/><circle cx="2" cy="10.6" r="1.1" fill="#555"/></svg>
<div class="t" style="left:566px;top:477px;font-size:13.3px;color:#585858">12/30/2023</div>
<div class="t" style="left:653px;top:477px;font-size:13.3px;color:#585858">03/22/2024</div>
<div class="t" style="left:740px;top:477px;font-size:13.3px;color:#585858">84 days</div>
<div class="t" style="left:96px;width:45px;text-align:center;top:511px;font-size:11.5px;color:#666">13.</div>
<svg class="a" style="left:175.8px;top:510.6px" width="8" height="12"><path d="M0.8 0.8L4.6 5.4L0.8 10" fill="none" stroke="#777" stroke-width="1.1"/></svg>
<svg class="a" style="left:187px;top:510.8px" width="15" height="11.5"><rect x="0" y="0" width="14.6" height="11.4" rx="2" fill="#86c80a"/><path d="M3.6 4.4H7.2M5.4 6.5L7.3 8.4L11.2 4.9" fill="none" stroke="#fff" stroke-width="1.4" stroke-linecap="round" stroke-linejoin="round"/></svg>
<div class="t" style="left:209px;top:509px;font-size:13px;font-weight:700;color:#0fb956">1D Boards</div>
<div class="a" style="left:473px;top:507px;width:61px;height:17px;border:1.3px solid #8fd13a;background:#f4fbe9;border-radius:4px"></div>
<div class="t" style="left:478.2px;top:510.8px;font-size:11px;font-weight:700;color:#7cc417">Capabilty</div>
<svg class="a" style="left:541px;top:509.4px" width="4" height="14"><circle cx="2" cy="3.2" r="1.1" fill="#555"/><circle cx="2" cy="6.9" r="1.1" fill="#555"/><circle cx="2" cy="10.6" r="1.1" fill="#555"/></svg>
<div class="t" style="left:566px;top:509px;font-size:13.3px;color:#585858">01/09/2022</div>
<div class="t" style="left:653px;top:509px;font-size:13.3px;color:#585858">06/14/2024</div>
<div class="t" style="left:740px;top:509px;font-size:13.3px;color:#585858">2 years</div>
<div class="t" style="left:96px;width:45px;text-align:center;top:543px;font-size:11.5px;color:#666">14.</div>
<svg class="a" style="left:175.8px;top:542.6px" width="8" height="12"><path d="M0.8 0.8L4.6 5.4L0.8 10" fill="none" stroke="#777" stroke-width="1.1"/></svg>
<svg class="a" style="left:187px;top:542.8px" width="15" height="11.5"><rect x="0" y="0" width="14.6" height="11.4" rx="2" fill="#86c80a"/><path d="M3.6 4.4H7.2M5.4 6.5L7.3 8.4L11.2 4.9" fill="none" stroke="#fff" stroke-width="1.4" stroke-linecap="round" stroke-linejoin="round"/></svg>
<div class="t" style="left:209px;top:541px;font-size:13px;font-weight:700;color:#0fb956">Child Items</div>
<div class="a" style="left:473px;top:539px;width:61px;height:17px;border:1.3px solid #8fd13a;background:#f4fbe9;border-radius:4px"></div>
<div class="t" style="left:478.2px;top:542.8px;font-size:11px;font-weight:700;color:#7cc417">Capabilty</div>
<svg class="a" style="left:541px;top:541.4px" width="4" height="14"><circle cx="2" cy="3.2" r="1.1" fill="#555"/><circle cx="2" cy="6.9" r="1.1" fill="#555"/><circle cx="2" cy="10.6" r="1.1" fill="#555"/></svg>
<div class="t" style="left:566px;top:541px;font-size:13.3px;color:#585858">07/01/2023</div>
<div class="t" style="left:653px;top:541px;font-size:13.3px;color:#585858">12/29/2023</div>
<div class="t" style="left:740px;top:541px;font-size:13.3px;color:#585858">182 days</div>
<div class="t" style="left:96px;width:45px;text-align:center;top:575px;font-size:11.5px;color:#666">15.</div>
<svg class="a" style="left:175.8px;top:574.6px" width="8" height="12"><path d="M0.8 0.8L4.6 5.4L0.8 10" fill="none" stroke="#777" stroke-width="1.1"/></svg>
<svg class="a" style="left:187px;top:574.8px" width="15" height="11.5"><rect x="0" y="0" width="14.6" height="11.4" rx="2" fill="#86c80a"/><path d="M3.6 4.4H7.2M5.4 6.5L7.3 8.4L11.2 4.9" fill="none" stroke="#fff" stroke-width="1.4" stroke-linecap="round" stroke-linejoin="round"/></svg>
<div class="t" style="left:209px;top:573px;font-size:13px;font-weight:700;color:#0fb956">Cadences</div>
<div class="a" style="left:473px;top:571px;width:61px;height:17px;border:1.3px solid #8fd13a;background:#f4fbe9;border-radius:4px"></div>
<div class="t" style="left:478.2px;top:574.8px;font-size:11px;font-weight:700;color:#7cc417">Capabilty</div>
<svg class="a" style="left:541px;top:573.4px" width="4" height="14"><circle cx="2" cy="3.2" r="1.1" fill="#555"/><circle cx="2" cy="6.9" r="1.1" fill="#555"/><circle cx="2" cy="10.6" r="1.1" fill="#555"/></svg>
<div class="t" style="left:566px;top:573px;font-size:13.3px;color:#585858">10/07/2023</div>
<div class="t" style="left:653px;top:573px;font-size:13.3px;color:#585858">03/22/2024</div>
<div class="t" style="left:740px;top:573px;font-size:13.3px;color:#585858">168 days</div>
<div class="t" style="left:96px;width:45px;text-align:center;top:607px;font-size:11.5px;color:#666">16.</div>
<svg class="a" style="left:175.8px;top:606.6px" width="8" height="12"><path d="M0.8 0.8L4.6 5.4L0.8 10" fill="none" stroke="#777" stroke-width="1.1"/></svg>
<svg class="a" style="left:187px;top:606.8px" width="15" height="11.5"><rect x="0" y="0" width="14.6" height="11.4" rx="2" fill="#86c80a"/><path d="M3.5 4.4H9M3.5 6.8H11" stroke="#fff" stroke-width="1.4"/></svg>
<div class="t" style="left:209px;top:605px;font-size:13px;font-weight:700;color:#f0335c">2D Boards</div>
<div class="a" style="left:473px;top:603px;width:61px;height:17px;border:1.3px solid #8fd13a;background:#f4fbe9;border-radius:4px"></div>
<div class="t" style="left:478.2px;top:606.8px;font-size:11px;font-weight:700;color:#7cc417">Capabilty</div>
<svg class="a" style="left:541px;top:605.4px" width="4" height="14"><circle cx="2" cy="3.2" r="1.1" fill="#555"/><circle cx="2" cy="6.9" r="1.1" fill="#555"/><circle cx="2" cy="10.6" r="1.1" fill="#555"/></svg>
<div class="t" style="left:566px;top:605px;font-size:13.3px;color:#585858">10/07/2023</div>
<div class="t" style="left:653px;top:605px;font-size:13.3px;color:#585858">03/22/2024</div>
<div class="t" style="left:740px;top:605px;font-size:13.3px;color:#585858">168 days</div>
<div class="t" style="left:96px;width:45px;text-align:center;top:639px;font-size:11.5px;color:#666">17.</div>
<svg class="a" style="left:175.8px;top:638.6px" width="8" height="12"><path d="M0.8 0.8L4.6 5.4L0.8 10" fill="none" stroke="#777" stroke-width="1.1"/></svg>
<svg class="a" style="left:187px;top:638.8px" width="15" height="11.5"><rect x="0" y="0" width="14.6" height="11.4" rx="2" fill="#86c80a"/><path d="M3.6 4.4H7.2M5.4 6.5L7.3 8.4L11.2 4.9" fill="none" stroke="#fff" stroke-width="1.4" stroke-linecap="round" stroke-linejoin="round"/></svg>
<div class="t" style="left:209px;top:637px;font-size:13px;font-weight:700;color:#0fb956">Board Hierarchy</div>
<div class="a" style="left:473px;top:635px;width:61px;height:17px;border:1.3px solid #8fd13a;background:#f4fbe9;border-radius:4px"></div>
<div class="t" style="left:478.2px;top:638.8px;font-size:11px;font-weight:700;color:#7cc417">Capabilty</div>
<svg class="a" style="left:541px;top:637.4px" width="4" height="14"><circle cx="2" cy="3.2" r="1.1" fill="#555"/><circle cx="2" cy="6.9" r="1.1" fill="#555"/><circle cx="2" cy="10.6" r="1.1" fill="#555"/></svg>
<div class="t" style="left:566px;top:637px;font-size:13.3px;color:#585858">10/07/2023</div>
<div class="t" style="left:653px;top:637px;font-size:13.3px;color:#585858">06/14/2024</div>
<div class="t" style="left:740px;top:637px;font-size:13.3px;color:#585858">252 days</div>
<div class="t" style="left:96px;width:45px;text-align:center;top:671px;font-size:11.5px;color:#666">18.</div>
<svg class="a" style="left:164.5px;top:672px" width="12" height="8"><path d="M0.6 1.2L4.7 5.2L8.8 1.2" fill="none" stroke="#777" stroke-width="1.1"/></svg>
<svg class="a" style="left:179.8px;top:670.8px" width="15" height="11.5"><rect x="0" y="0" width="14.6" height="11.4" rx="2" fill="#fb8a58"/><path d="M3.6 4.4H7.2M5.4 6.5L7.3 8.4L11.2 4.9" fill="none" stroke="#fff" stroke-width="1.4" stroke-linecap="round" stroke-linejoin="round"/></svg>
<div class="t" style="left:202px;top:669px;font-size:13px;font-weight:700;color:#0fb956">P-14 AI Description Templates</div>
<div class="a" style="left:502px;top:667px;width:32px;height:17px;border:1.3px solid #fb8f60;background:#fff4ef;border-radius:4px"></div>
<div class="t" style="left:506.5px;top:671px;font-size:10.8px;font-weight:700;color:#fb8a58">Epic</div>
<svg class="a" style="left:541px;top:669.4px" width="4" height="14"><circle cx="2" cy="3.2" r="1.1" fill="#555"/><circle cx="2" cy="6.9" r="1.1" fill="#555"/><circle cx="2" cy="10.6" r="1.1" fill="#555"/></svg>
<div class="t" style="left:566px;top:669px;font-size:13.3px;color:#585858">03/08/2025</div>
<div class="t" style="left:653px;top:669px;font-size:13.3px;color:#585858">05/30/2025</div>
<div class="t" style="left:740px;top:669px;font-size:13.3px;color:#585858">84 days</div>
</div></div>
<svg class="a" style="left:449px;top:603px" width="18" height="18"><g fill="none" stroke="#f0335c" stroke-width="1.2"><rect x="1.6" y="2.4" width="11" height="11.6" rx="2"/><path d="M1.6 5.4H12.6"/></g><circle cx="12.6" cy="13.4" r="3.4" fill="#f0335c" stroke="#fff" stroke-width="0.8"/><path d="M12.6 11.6V13.6" stroke="#fff" stroke-width="1"/><circle cx="12.6" cy="15.1" r="0.5" fill="#fff"/></svg>
<!-- GANTT -->
<div class="a" style="left:797px;top:175px;width:702px;height:525px;overflow:hidden">
<div class="a" style="left:130px;top:0;width:1px;height:37px;background:#dadada"></div>
<div class="a" style="left:130px;top:81px;width:1px;height:444px;background:#dedede"></div>
<div class="a" style="left:413px;top:0;width:1px;height:37px;background:#dadada"></div>
<div class="a" style="left:413px;top:81px;width:1px;height:444px;background:#dedede"></div>
<div class="a" style="left:696px;top:0;width:1px;height:37px;background:#dadada"></div>
<div class="a" style="left:696px;top:81px;width:1px;height:444px;background:#dedede"></div>
<div class="a" style="left:29.0px;top:37px;width:1px;height:22px;background:#dadada"></div>
<div class="a" style="left:93.0px;top:37px;width:1px;height:22px;background:#dadada"></div>
<div class="a" style="left:157.0px;top:37px;width:1px;height:22px;background:#dadada"></div>
<div class="a" style="left:221.0px;top:37px;width:1px;height:22px;background:#dadada"></div>
<div class="a" style="left:285.0px;top:37px;width:1px;height:22px;background:#dadada"></div>
<div class="a" style="left:349.0px;top:37px;width:1px;height:22px;background:#dadada"></div>
<div class="a" style="left:413.0px;top:37px;width:1px;height:22px;background:#dadada"></div>
<div class="a" style="left:477.0px;top:37px;width:1px;height:22px;background:#dadada"></div>
<div class="a" style="left:541.0px;top:37px;width:1px;height:22px;background:#dadada"></div>
<div class="a" style="left:605.0px;top:37px;width:1px;height:22px;background:#dadada"></div>
<div class="a" style="left:669.0px;top:37px;width:1px;height:22px;background:#dadada"></div>
<div class="a" style="left:10.899999999999977px;top:59px;width:1px;height:22px;background:#dadada"></div>
<svg class="a" style="left:11px;top:81px" width="2" height="444"><line x1="0.5" y1="0" x2="0.5" y2="444" stroke="#c9c9c9" stroke-width="1" stroke-dasharray="2.6 1.95"/></svg>
<div class="a" style="left:138.89999999999998px;top:59px;width:1px;height:22px;background:#dadada"></div>
<svg class="a" style="left:139px;top:81px" width="2" height="444"><line x1="0.5" y1="0" x2="0.5" y2="444" stroke="#c9c9c9" stroke-width="1" stroke-dasharray="2.6 1.95"/></svg>
<div class="a" style="left:266.9000000000001px;top:59px;width:1px;height:22px;background:#dadada"></div>
<svg class="a" style="left:267px;top:81px" width="2" height="444"><line x1="0.5" y1="0" x2="0.5" y2="444" stroke="#c9c9c9" stroke-width="1" stroke-dasharray="2.6 1.95"/></svg>
<div class="a" style="left:394.9000000000001px;top:59px;width:1px;height:22px;background:#dadada"></div>
<svg class="a" style="left:395px;top:81px" width="2" height="444"><line x1="0.5" y1="0" x2="0.5" y2="444" stroke="#c9c9c9" stroke-width="1" stroke-dasharray="2.6 1.95"/></svg>
<div class="a" style="left:522.9000000000001px;top:59px;width:1px;height:22px;background:#dadada"></div>
<svg class="a" style="left:523px;top:81px" width="2" height="444"><line x1="0.5" y1="0" x2="0.5" y2="444" stroke="#c9c9c9" stroke-width="1" stroke-dasharray="2.6 1.95"/></svg>
<div class="a" style="left:650.9000000000001px;top:59px;width:1px;height:22px;background:#dadada"></div>
<svg class="a" style="left:651px;top:81px" width="2" height="444"><line x1="0.5" y1="0" x2="0.5" y2="444" stroke="#c9c9c9" stroke-width="1" stroke-dasharray="2.6 1.95"/></svg>
<div class="t" style="left:-67px;width:120px;text-align:center;top:13.5px;font-size:11.8px;color:#666">Nov 2023</div>
<div class="t" style="left:211.79999999999995px;width:120px;text-align:center;top:13.5px;font-size:11.8px;color:#666">Dec 2023</div>
<div class="t" style="left:495px;width:120px;text-align:center;top:13.5px;font-size:11.8px;color:#666">Jan 2024</div>
<div class="t" style="left:-42.5px;width:80px;text-align:center;top:44px;font-size:12px;color:#666">13-19</div>
<div class="t" style="left:21.5px;width:80px;text-align:center;top:44px;font-size:12px;color:#666">20-26</div>
<div class="t" style="left:85.5px;width:80px;text-align:center;top:44px;font-size:12px;color:#666">27-3</div>
<div class="t" style="left:149.5px;width:80px;text-align:center;top:44px;font-size:12px;color:#666">4-10</div>
<div class="t" style="left:213.5px;width:80px;text-align:center;top:44px;font-size:12px;color:#666">11-17</div>
<div class="t" style="left:277.5px;width:80px;text-align:center;top:44px;font-size:12px;color:#666">18-24</div>
<div class="t" style="left:341.5px;width:80px;text-align:center;top:44px;font-size:12px;color:#666">25-31</div>
<div class="t" style="left:405.5px;width:80px;text-align:center;top:44px;font-size:12px;color:#666">1-7</div>
<div class="t" style="left:469.5px;width:80px;text-align:center;top:44px;font-size:12px;color:#666">8-14</div>
<div class="t" style="left:533.5px;width:80px;text-align:center;top:44px;font-size:12px;color:#666">15-21</div>
<div class="t" style="left:597.5px;width:80px;text-align:center;top:44px;font-size:12px;color:#666">22-28</div>
<div class="t" style="left:661.5px;width:80px;text-align:center;top:44px;font-size:12px;color:#666">29-4</div>
<div class="t" style="left:-102.60000000000002px;width:100px;text-align:center;top:64.5px;font-size:11.6px;color:#666">Sprint 8.3</div>
<div class="t" style="left:25.399999999999977px;width:100px;text-align:center;top:64.5px;font-size:11.6px;color:#666">Sprint 8.4</div>
<div class="t" style="left:153.39999999999998px;width:100px;text-align:center;top:64.5px;font-size:11.6px;color:#666">Sprint 8.5</div>
<div class="t" style="left:281.4000000000001px;width:100px;text-align:center;top:64.5px;font-size:11.6px;color:#666">Sprint 8.6</div>
<div class="t" style="left:409.4000000000001px;width:100px;text-align:center;top:64.5px;font-size:11.6px;color:#666">Sprint 9.1</div>
<div class="t" style="left:537.4000000000001px;width:100px;text-align:center;top:64.5px;font-size:11.6px;color:#666">Sprint 9.2</div>
<div class="t" style="left:665.4000000000001px;width:100px;text-align:center;top:64.5px;font-size:11.6px;color:#666">Sprint 9.3</div>
<div class="a" style="left:0;top:82px;width:702px;height:443px;overflow:hidden"><div class="a" style="left:0;top:-82px;width:702px;height:525px">
<svg class="a" style="left:8.0px;top:80.9px" width="8" height="8"><path d="M0.2 3.5L7.2 0V7Z" fill="#bdbdbd"/></svg>
<div class="t" style="left:20.700000000000045px;top:79.7px;font-size:11.4px;color:#c8c8c8">PI-2 Cycle Enhancements</div>
<svg class="a" style="left:8.0px;top:112.9px" width="8" height="8"><path d="M0.2 3.5L7.2 0V7Z" fill="#bdbdbd"/></svg>
<div class="t" style="left:20.700000000000045px;top:111.7px;font-size:11.4px;color:#c8c8c8">PI-3 Cycle Enhancements</div>
<svg class="a" style="left:8.0px;top:144.9px" width="8" height="8"><path d="M0.2 3.5L7.2 0V7Z" fill="#bdbdbd"/></svg>
<div class="t" style="left:20.700000000000045px;top:143.7px;font-size:11.4px;color:#c8c8c8">PI-4 Cycle Enhancements</div>
<svg class="a" style="left:8.0px;top:176.9px" width="8" height="8"><path d="M0.2 3.5L7.2 0V7Z" fill="#bdbdbd"/></svg>
<div class="t" style="left:20.700000000000045px;top:175.7px;font-size:11.4px;color:#c8c8c8">PI-5 Cycle Enhancements</div>
<svg class="a" style="left:8.0px;top:208.9px" width="8" height="8"><path d="M0.2 3.5L7.2 0V7Z" fill="#bdbdbd"/></svg>
<div class="t" style="left:20.700000000000045px;top:207.7px;font-size:11.4px;color:#c8c8c8">PI-6 Cycle Enhancements</div>
<div class="a" style="left:0;top:109px;width:702px;height:3.2px;background:#7fcb0c"></div>
<svg class="a" style="left:2.5px;top:95.5px" width="14" height="14"><circle cx="6.8" cy="6.9" r="5.3" fill="#fff" stroke="#86cc1a" stroke-width="1.15"/><path d="M4.5 6.9H9.1" stroke="#86cc1a" stroke-width="1.1"/></svg>
<div class="t" style="left:21.799999999999955px;top:96.79999999999998px;font-size:11.3px;font-weight:700;color:#4a4a4a">Day 1 Requirements</div>
<div class="a" style="left:0px;top:267px;width:386px;height:14px;background:#fb8a58"></div>
<svg class="a" style="left:0px;top:283px" width="386" height="2"><line x1="0" y1="1" x2="386" y2="1" stroke="#fdb597" stroke-width="2" stroke-dasharray="2.9 1.65"/></svg>
<svg class="a" style="left:0px;top:315px" width="702" height="2"><line x1="0" y1="1" x2="702" y2="1" stroke="#b0dc66" stroke-width="2" stroke-dasharray="2.9 1.65"/></svg>
<div class="a" style="left:395px;top:299px;width:307px;height:14px;background:#fb8a58"></div>
<svg class="a" style="left:396.5px;top:315px" width="305.5" height="2"><line x1="0" y1="1" x2="305.5" y2="1" stroke="#fdb597" stroke-width="2" stroke-dasharray="2.9 1.65"/></svg>
<div class="a" style="left:0px;top:331px;width:702px;height:14px;background:#86c80a"></div>
<svg class="a" style="left:0px;top:347px" width="702" height="2"><line x1="0" y1="1" x2="702" y2="1" stroke="#b0dc66" stroke-width="2" stroke-dasharray="2.9 1.65"/></svg>
<div class="a" style="left:0px;top:363px;width:395px;height:14px;background:#86c80a"></div>
<svg class="a" style="left:0px;top:379px" width="395" height="2"><line x1="0" y1="1" x2="395" y2="1" stroke="#b0dc66" stroke-width="2" stroke-dasharray="2.9 1.65"/></svg>
<div class="a" style="left:0px;top:395px;width:702px;height:14px;background:#86c80a"></div>
<svg class="a" style="left:0px;top:411px" width="702" height="2"><line x1="0" y1="1" x2="702" y2="1" stroke="#b0dc66" stroke-width="2" stroke-dasharray="2.9 1.65"/></svg>
<div class="a" style="left:0px;top:427px;width:702px;height:14px;background:#86c80a"></div>
<svg class="a" style="left:0px;top:443px" width="702" height="2"><line x1="0" y1="1" x2="702" y2="1" stroke="#b0dc66" stroke-width="2" stroke-dasharray="2.9 1.65"/></svg>
<div class="a" style="left:0px;top:459px;width:702px;height:14px;background:#86c80a"></div>
<svg class="a" style="left:0px;top:475px" width="702" height="2"><line x1="0" y1="1" x2="702" y2="1" stroke="#b0dc66" stroke-width="2" stroke-dasharray="2.9 1.65"/></svg>
<div class="a" style="left:394px;top:377px;width:1.5px;height:4px;background:#b5df6e"></div>
<svg class="a" style="left:401.70000000000005px;top:268.6px" width="13" height="12"><path d="M1 5.6L4.6 9.6L11.4 0.8" fill="none" stroke="#0fb956" stroke-width="2"/></svg>
<div class="t" style="left:418.20000000000005px;top:269.1px;font-size:11.3px;font-weight:700;color:#0fb956">PI-8 Cycle Enhancements</div>
<svg class="a" style="left:410.9000000000001px;top:364px" width="13" height="12"><path d="M1 5.6L4.6 9.6L11.4 0.8" fill="none" stroke="#0fb956" stroke-width="2"/></svg>
<div class="t" style="left:427.4000000000001px;top:364.5px;font-size:11.3px;font-weight:700;color:#0fb956">Child Items</div>
<svg class="a" style="left:-797px;top:-175px" width="1536" height="749"><path d="M1183 449H1192V469H1182.8V480.5H1190" fill="none" stroke="#666" stroke-width="1.3"/><path d="M1188 477.6L1191.4 480.5L1188 483.4" fill="none" stroke="#666" stroke-width="1.3"/></svg>
<div class="t" style="left:525px;width:180px;top:494.4px;font-size:11.6px;color:#c9c9c9">P-14 AI Description Templates</div>
<svg class="a" style="left:686px;top:495px" width="8" height="8"><path d="M0.3 0.4L7.4 4L0.3 7.6Z" fill="#c4c4c4"/></svg>
</div></div>
</div>
<div class="a" style="left:797px;top:437px;width:18px;height:36.5px;background:#cbcbcb;border-radius:0 4px 4px 0"></div>
<svg class="a" style="left:797px;top:437px" width="18" height="37"><path d="M10.2 15.6L7.6 18.3L10.2 21" fill="none" stroke="#444" stroke-width="1.1"/></svg>
<svg class="a" style="left:0;top:0" width="1536" height="749"><g fill="#e3151d" stroke="none"><path d="M948.2 139.3L936.5 142.5L943.4 150.5Z"/><path d="M1065.6 221.1L1065 210.9L1075.2 213.9Z"/><path d="M1166 248.7L1162.4 239.7L1172 240.9Z"/></g><g stroke="#e3151d" stroke-width="2" fill="none"><path d="M931.2 154.2L941 146"/><path d="M1075 201.3L1069.6 213"/><path d="M1171.6 195.2L1167.4 241"/></g></svg>
<div class="t" style="left:916.8px;top:153.4px;font-size:18.6px;color:#e3151d">3</div>
<div class="t" style="left:1083.5px;top:200.6px;font-size:17.4px;color:#e3151d">2</div>
<div class="t" style="left:1174.6px;top:177px;font-size:16.5px;color:#e3151d">1</div>

</body></html>
